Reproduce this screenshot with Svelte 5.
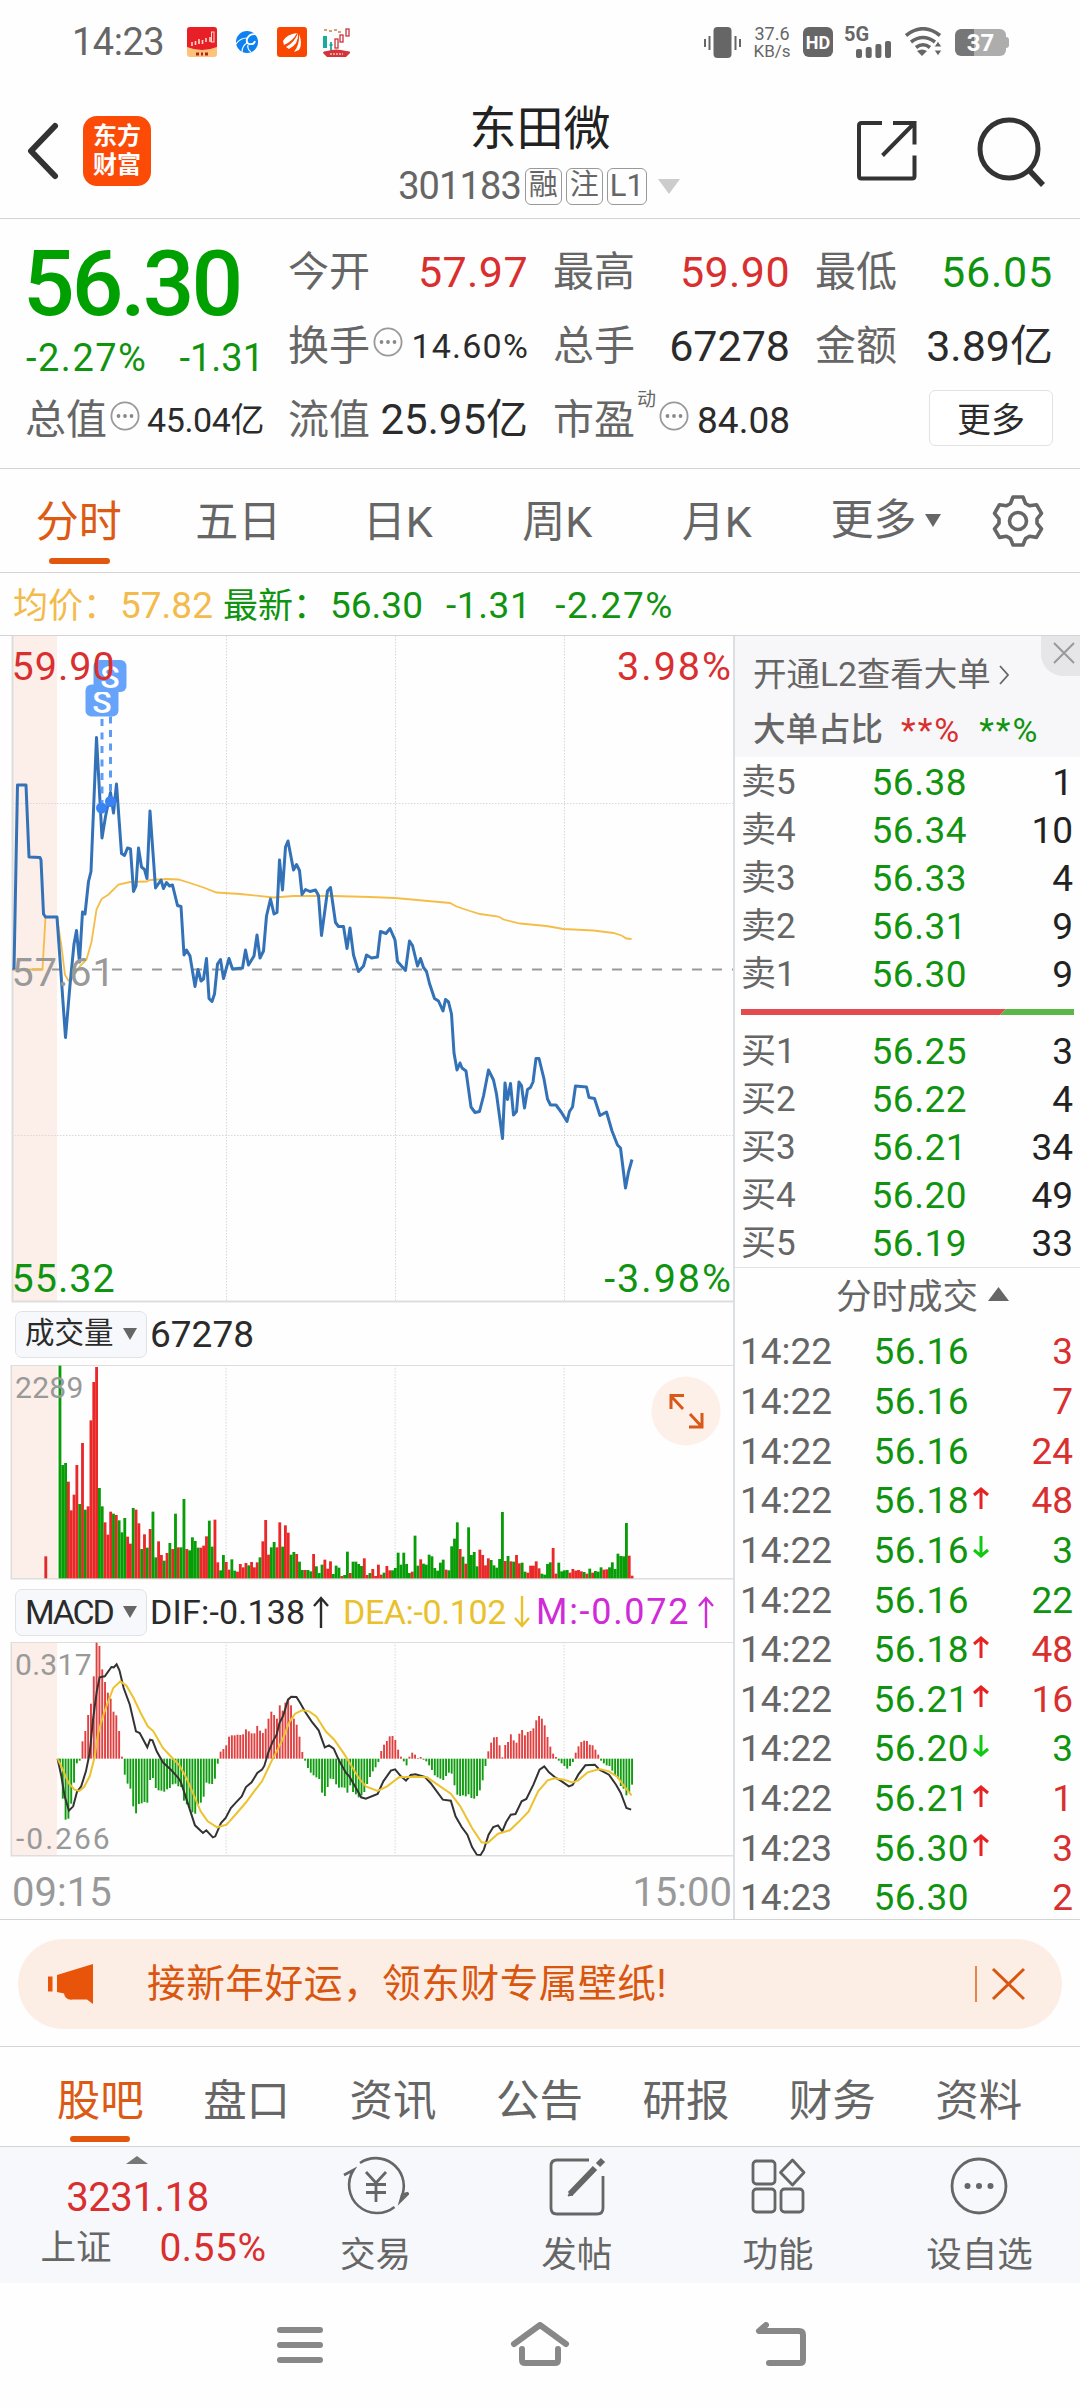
<script>
	const stats = [
		{ label: '今开', value: '57.97', tone: 'up' },
		{ label: '最高', value: '59.90', tone: 'up' },
		{ label: '最低', value: '56.05', tone: 'down' },
		{ label: '换手', value: '14.60%', info: true, size: 'small percent' },
		{ label: '总手', value: '67278' },
		{ label: '金额', value: '3.89亿' },
		{ label: '流值', value: '25.95亿', size: 'tight' },
		{ label: '市盈', value: '84.08', sup: '动', info: true, size: 'medium' }
	];

	const periods = ['分时', '五日', '日K', '周K', '月K'];
	const sections = ['股吧', '盘口', '资讯', '公告', '研报', '财务', '资料'];

	const asks = [
		['卖5', '56.38', 1],
		['卖4', '56.34', 10],
		['卖3', '56.33', 4],
		['卖2', '56.31', 9],
		['卖1', '56.30', 9]
	];

	const bids = [
		['买1', '56.25', 3],
		['买2', '56.22', 4],
		['买3', '56.21', 34],
		['买4', '56.20', 49],
		['买5', '56.19', 33]
	];

	const trades = [
		{ time: '14:22', price: '56.16', qty: 3, side: 'up' },
		{ time: '14:22', price: '56.16', qty: 7, side: 'up' },
		{ time: '14:22', price: '56.16', qty: 24, side: 'up' },
		{ time: '14:22', price: '56.18', move: 'up', qty: 48, side: 'up' },
		{ time: '14:22', price: '56.16', move: 'down', qty: 3, side: 'down' },
		{ time: '14:22', price: '56.16', qty: 22, side: 'down' },
		{ time: '14:22', price: '56.18', move: 'up', qty: 48, side: 'up' },
		{ time: '14:22', price: '56.21', move: 'up', qty: 16, side: 'up' },
		{ time: '14:22', price: '56.20', move: 'down', qty: 3, side: 'down' },
		{ time: '14:22', price: '56.21', move: 'up', qty: 1, side: 'up' },
		{ time: '14:23', price: '56.30', move: 'up', qty: 3, side: 'up' },
		{ time: '14:23', price: '56.30', qty: 2, side: 'up' }
	];

	const priceLine =
		'14,969.5 17.5,785 26,785 29,857 40,857.5 41,860 43.5,914 45.5,917 57,917 65.5,1037.5 70,985 74,944 76.5,930.5 79.5,962 82.5,912 85,914 88.5,881.5 91,871.5 96.5,737.5 102,838 105.5,816.5 110.5,792.5 113.5,813 116.5,784 121.5,853.5 124.5,855.5 127.5,848 130.5,849 133.5,891.5 136,886 138.5,848 141.5,867 144.5,869.5 147,878.5 150,811 155.5,888 161,880 163.5,888.5 166.5,882.5 169.5,886 172.5,885 177.5,905.5 181,906.5 184,955 186.5,950 190,956 195,986.5 198,969.5 201,981 203.5,979 206.5,958.5 209,998.5 212,1001.5 214.5,994 217.5,964 220.5,959.5 223.5,978.5 229,958.5 232.5,969 242.5,968 245.5,950 248.5,965 254,956 257,935 260,958 263.5,951 266.5,916 270.5,899 274,914 277,912.5 279.5,860 282.5,890 285.5,847 288,841 293.5,870 296.5,864.5 299.5,870.5 302,894.5 305.5,889.5 310,891.5 315.5,890 318.5,895.5 321.5,935.5 327.5,891 330.5,887.5 335.5,922.5 338.5,926.5 343.5,926.5 347,948.5 350,928 353.5,955 358.5,971.5 363.5,966 366.5,955 371.5,958 377.5,957 380.5,931.5 386,933.5 390,928.5 395,940 397.5,961.5 405.5,970.5 409.5,941 412.5,945.5 417.5,966 420.5,958.5 423.5,967.5 426.5,971.5 429.5,983.5 434.5,998.5 438.5,1001 443,1011 445.5,999.5 448.5,1002 451.5,1014 454,1053 457,1070 460,1063 462,1068 466,1071 471,1107 475,1112.5 479.5,1111.5 483.5,1096 488.5,1070 493.5,1080 496.5,1094 502.5,1138.5 505,1083 507.5,1099.5 510.5,1083.5 513.5,1115 516.5,1111.5 519,1082 521.5,1085.5 524.5,1108 527.5,1089.5 530.5,1087.5 533,1082 536,1058.5 539,1058.5 544,1079 547.5,1099 550.5,1105 556,1105 561.5,1112.5 567,1121.5 569.5,1111.5 572.5,1107 575.5,1086 586.5,1087 589,1097.5 594.5,1098.5 600,1115.5 606.5,1112 612,1131 617.5,1145 620.5,1148 625.5,1188 628.5,1172 632,1159.5';

	const averageLine =
		'14,969.5 42.5,969.5 45.5,917 57,917 61.5,946.5 65,975 68.5,980.5 71.5,979 80,966 86.5,959.5 91.5,942 96.5,909.5 101.5,899 108.5,894.5 118.5,884.5 130,882 146.5,881.5 150,880 166.5,879 178.5,879.5 190,883 203.5,887.5 216.5,892.5 240,894 273.5,897.5 293.5,896 333.5,896 370,897 395,898 450,903 456.5,906.5 470,911 480,914 498.5,916.5 503.5,919.5 520,923.5 546.5,926 563.5,929 593.5,930.5 613.5,933 621.5,935.5 626.5,938.5 631.5,939';

	// one bar per minute: direction, then height in chart units
	const volumes =
		'g638 g340 g346 r290 r204 r251 r340 g223 r406 g206 r216 r474 r589 r634 g271 g216 r168 r131 r200 g194 r190 g174 g138 g181 r125 r104 g211 r206 r165 g88 r132 g92 r148 g200 g63 r111 r70 g53 r76 g106 r88 g194 r93 g93 g238 r88 g84 g123 g112 g92 r92 r98 r126 g173 g95 r176 r48 g24 g70 r49 r26 g57 g23 r20 r43 r33 r46 g39 r49 r33 r48 g63 r111 r175 r71 g93 g109 r93 r168 g95 r159 r137 g71 g79 r73 g50 g25 r25 g25 g21 r73 g36 g16 g41 r56 r29 r51 g13 g38 g32 r7 g10 g80 r16 g50 g50 g43 g37 r60 r10 g16 r28 r7 r41 r11 g17 r37 r24 g24 g31 g77 g41 g77 g43 g16 r20 g128 g38 r57 g44 g41 g71 g66 g31 g23 g47 g56 r26 g24 g96 g119 g168 r88 g65 r44 g153 g70 g79 g36 r86 r70 r39 r60 g55 g39 g32 g58 g199 r52 g67 r51 g50 r70 r45 g47 g20 r17 r38 r38 r51 r30 g14 g11 g43 g48 r91 r14 g47 g21 g24 g25 r17 r28 r23 r25 r21 g19 r14 g29 r17 g22 g20 g33 r26 r27 g33 g48 g28 g74 g67 g66 g166 r68 r8'
			.split(' ')
			.map((bar) => ({ rising: bar[0] === 'r', size: Number(bar.slice(1)) }));

	const macd = [
		-20, -120, -183, -180, -135, -72, -14, -6, 52, 83, 131, 165, 247, 348, 338, 268, 230, 198, 180, 141, 130, 83, 6,
		-48, -75, -90, -143, -164, -136, -134, -130, -132, -64, -58, -88, -95, -96, -99, -92, -88, -77, -75, -83, -85,
		-126, -137, -148, -161, -165, -136, -132, -114, -72, -75, -76, -60, -15, 21, 29, 40, 66, 70, 70, 72, 71, 73, 88,
		82, 76, 76, 98, 84, 77, 90, 120, 141, 131, 120, 160, 144, 168, 178, 160, 120, 102, 66, 20, -6, -28, -42, -50,
		-56, -61, -102, -112, -85, -60, -61, -77, -87, -86, -87, -102, -80, -100, -107, -116, -110, -100, -76, -55, -38,
		-26, -10, 23, 42, 53, 67, 68, 56, 27, 6, -8, -20, 6, 18, 12, 2, 5, -3, -8, -20, -34, -50, -56, -60, -64, -52,
		-42, -45, -80, -108, -112, -110, -113, -107, -118, -120, -112, -95, -65, -22, 22, 48, 64, 65, 40, 4, 41, 50, 73,
		55, 48, 75, 86, 70, 80, 83, 91, 115, 128, 120, 100, 65, 36, 15, 5, -6, -14, -22, -30, -22, -10, 18, 37, 50, 54,
		53, 42, 40, 27, 12, -6, -14, -20, -22, -36, -50, -60, -82, -90, -110, -100, -78
	];

	const difLine =
		'122,537 130,590 137,650 146,693 155,680 163,637 172,620 182,575 190,520 197,420 205,335 211,293 222,290 236,262 241,263 247,254 253,272 262,325 275,375 288,455 296,460 312,503 318,480 323,482 332,515 345,548 362,570 378,595 383,607 400,680 413,737 430,760 437,752 451,773 456,770 468,730 478,715 489,685 500,668 512,650 521,622 533,608 545,580 555,570 560,558 568,520 577,488 586,465 592,430 600,408 610,360 617,351 628,352 636,370 647,398 660,425 675,452 688,503 697,497 707,507 718,542 733,580 740,590 752,620 765,653 775,657 800,643 812,605 828,573 837,569 848,588 860,603 870,586 880,584 900,592 912,610 938,660 955,663 965,710 978,742 990,765 1000,802 1010,825 1018,826 1025,810 1035,765 1045,742 1055,737 1064,755 1072,728 1082,705 1092,703 1105,665 1115,658 1130,615 1143,570 1153,560 1163,578 1175,592 1190,605 1205,620 1213,616 1225,585 1240,557 1260,555 1270,570 1290,585 1305,615 1315,640 1327,685 1337,690';

	const deaLine =
		'122,537 133,570 145,610 158,630 168,634 178,622 190,590 200,535 208,460 218,410 228,370 240,325 255,305 268,318 283,355 298,400 313,440 325,455 345,505 365,535 380,557 395,595 410,645 425,695 440,725 460,743 480,735 500,703 520,670 540,632 555,605 575,545 588,510 600,475 612,430 625,402 640,392 655,395 670,410 690,455 708,480 730,525 745,560 760,595 775,620 800,634 820,620 845,593 880,591 905,593 930,618 955,642 975,680 1000,745 1020,788 1033,790 1055,762 1080,752 1100,725 1120,695 1140,635 1160,602 1175,596 1195,600 1212,608 1225,602 1245,578 1270,568 1290,575 1308,592 1325,625 1338,647';

	const barX = (i) => 127 + i * 5.97;
</script>

{#snippet info()}
	<svg class="info" viewBox="0 0 30 30">
		<circle cx="15" cy="15" r="13.6" fill="none" stroke="#999" stroke-width="1.8" />
		<g fill="#888"><circle cx="8.5" cy="15" r="1.9" /><circle cx="15" cy="15" r="1.9" /><circle cx="21.5" cy="15" r="1.9" /></g>
	</svg>
{/snippet}

{#snippet cell(item)}
	<div class="cell">
		<span class="label">{item.label}</span>
		{#if item.sup}<sup>{item.sup}</sup>{/if}
		{#if item.info}{@render info()}{/if}
		<span class="value {item.tone ?? ''} {item.size ?? ''}">{item.value}</span>
	</div>
{/snippet}

<div class="screen">
	<div class="status">
		<span class="clock">14:23</span>
		<div class="apps">
			<svg width="30" height="30" viewBox="0 0 30 30">
				<rect width="30" height="30" rx="3" fill="#ffc27a" />
				<path d="M3 0h24a3 3 0 0 1 3 3v17q-15 6-30 0V3a3 3 0 0 1 3-3z" fill="#e91f27" />
				<path d="M5 15v4M8.500 14v4M12 12v5M15.500 13v4M19 11v4M23 10v5" stroke="#ffd9c8" stroke-width="1.600" />
				<rect x="24.500" y="5" width="2.500" height="10" fill="none" stroke="#ffd9c8" />
				<path d="M9 27h3M14 27h2M18 27h3" stroke="#b4241c" stroke-width="3" />
			</svg>
			<svg width="30" height="30" viewBox="0 0 30 30">
				<circle cx="15" cy="15" r="11" fill="#0d80f2" />
				<path d="M27 8q-9-3-12 4-1 4 2 5 5 1 6-3" fill="none" stroke="#fff" stroke-width="1.800" />
				<path d="M4 17q4-6 11-6M10 25q0-6 5-9M19 25q-4-3-3-7" fill="none" stroke="#fff" stroke-width="1.200" />
			</svg>
			<svg width="30" height="30" viewBox="0 0 30 30">
				<rect width="30" height="30" rx="3" fill="#f94600" />
				<path d="M6 14q4-7 14-8-4 8-13 12zM9 20q9-5 12-14 1 11-9 16zM17 25q6-8 5-18 4 10 0 16z" fill="#fff" />
			</svg>
			<svg width="30" height="30" viewBox="0 0 30 30">
				<path d="M3 9v12" stroke="#1caa9d" stroke-width="4" />
				<path d="M9 15v9M7.500 18h3" stroke="#1caa9d" stroke-width="1.800" />
				<g fill="#fff" stroke="#c8343c" stroke-width="1.300"><rect x="13" y="12" width="3" height="9" /><rect x="18" y="8" width="3" height="7" /><rect x="24" y="2" width="3" height="7" /></g>
				<path d="M7 4h3M12 3h3M16 5h3M2 3h3" stroke="#d69f74" stroke-width="2" />
				<path d="M1 26q0-2 4-2 9-3 19 0 5 0 4 2l-4 4H5z" fill="#d4353b" />
				<path d="M8 27h13" stroke="#fff" stroke-width="1.200" stroke-dasharray="2 1" />
			</svg>
		</div>
		<svg class="vibrate" width="37" height="31" viewBox="0 0 37 31">
			<rect x="9.500" width="18" height="31" rx="4" fill="#666" />
			<path d="M1 12v8M5.500 9v14M31.500 9v14M36 12v8" stroke="#666" stroke-width="2" />
		</svg>
		<div class="speed"><span>37.6</span><span>KB/s</span></div>
		<span class="hd">HD</span>
		<div class="signal">
			<span>5G</span>
			<svg width="36" height="17" viewBox="0 0 36 17" fill="#666">
				<rect y="8" width="6" height="9" rx="2" /><rect x="9.700" y="6" width="6" height="11" rx="2" /><rect x="19.400" y="3" width="6" height="14" rx="2" /><rect x="29" width="6" height="17" rx="2" />
			</svg>
		</div>
		<svg class="wifi" width="37" height="30" viewBox="0 0 37 30">
			<path d="M1 8.500q17-13.500 34 0M6 15q12-9 24 0M11 20.500q7-5.500 14 0" fill="none" stroke="#666" stroke-width="3.600" />
			<path d="M12 24q5-3 10 0l-5 5z" fill="#666" />
			<path d="M29 20h8l-4-6zM29 23h8l-4 6z" fill="#666" stroke="#fff" />
		</svg>
		<div class="battery"><span>37</span></div>
	</div>

	<header>
		<svg class="back" width="34" height="60" viewBox="0 0 34 60">
			<path d="M29 5L5 30l24 25" fill="none" stroke="#333" stroke-width="6" stroke-linecap="round" stroke-linejoin="round" />
		</svg>
		<div class="logo"><span>东方</span><span>财富</span></div>
		<div class="title">
			<h1>东田微</h1>
			<div class="code">
				<span class="number">301183</span>
				<span class="badge">融</span>
				<span class="badge">注</span>
				<span class="badge wide">L1</span>
				<svg width="22" height="15" viewBox="0 0 22 15"><path d="M0 0h22L11 15z" fill="#ccc" /></svg>
			</div>
		</div>
		<svg class="share" width="60" height="60" viewBox="0 0 60 60" fill="none" stroke="#333" stroke-width="4">
			<path d="M25 2H4.500Q2 2 2 4.500V55q0 2.500 2.500 2.500H55q2.500 0 2.500-2.500V34.500M36 2h21.500v21.500M57 2.500L25.500 34.500" />
		</svg>
		<svg class="search" width="70" height="72" viewBox="0 0 70 72" fill="none" stroke="#333" stroke-width="5">
			<circle cx="32" cy="33" r="29" /><path d="M51 53l15 16" stroke-width="5.500" />
		</svg>
	</header>

	<section class="quote">
		<div class="main">
			<span class="last">56.30</span>
			<div class="change"><span class="rate">-2.27%</span><span>-1.31</span></div>
			{@render cell({ label: '总值', value: '45.04亿', info: true, size: 'small' })}
		</div>
		<div class="stats">
			{#each stats as item}
				{@render cell(item)}
			{/each}
			<div class="cell end"><button>更多</button></div>
		</div>
	</section>

	<nav class="periods">
		{#each periods as name, i}
			<span class="period" class:active={i === 0}>{name}</span>
		{/each}
		<span class="period more">更多<svg width="16" height="13" viewBox="0 0 16 13"><path d="M0 0h16L8 13z" fill="#666" /></svg></span>
		<svg class="gear" width="54" height="54" viewBox="0 0 54 54" fill="none" stroke="#666" stroke-width="3.600" stroke-linejoin="round">
			<path d="M22 3h10l2.500 6.500 4 2.300 7-1.100 5 8.600-4.500 5.500v4.500l4.500 5.500-5 8.600-7-1.100-4 2.300L32 51H22l-2.500-6.400-4-2.300-7 1.100-5-8.600L8 29.300v-4.500l-4.500-5.500 5-8.600 7 1.100 4-2.300z" />
			<circle cx="27" cy="27" r="8.500" />
		</svg>
	</nav>

	<div class="legend">
		<span class="avg"><i>均价：</i>57.82</span>
		<span class="down"><i>最新：</i>56.30</span>
		<span class="down diff">-1.31</span>
		<span class="down rate">-2.27%</span>
	</div>

	<div class="board">
		<div class="charts">
			<svg class="price" viewBox="0 636 734 667">
				<rect x="12" y="636" width="45" height="665" fill="#fceee8" />
				<g stroke="#d8d8d8" stroke-dasharray="1.500 1.500">
					<path d="M12 803.500H733M12 1135.500H733M226.500 636V1301M395.500 636V1301M564.500 636V1301" />
				</g>
				<path d="M12.500 636V1301.500H733" fill="none" stroke="#ddd" stroke-width="2" />
				<path d="M12 969.500H733" stroke="#999" stroke-width="2" stroke-dasharray="10 10" />
				<polyline points={averageLine} fill="none" stroke="#f5bd48" stroke-width="1.800" />
				<polyline points={priceLine} fill="none" stroke="#3472b8" stroke-width="3" stroke-linejoin="round" />
				<path d="M102 719V804M110.500 703V798" stroke="#5c9cf5" stroke-width="3" stroke-dasharray="7 6.500" />
				<g fill="#3a83f5"><circle cx="101.500" cy="808" r="5.500" /><circle cx="110.500" cy="801.500" r="5.500" /></g>
				<rect x="85.500" y="684.500" width="33" height="32" rx="6" fill="#66a3fa" />
				<text x="102" y="712.500" class="trade-mark">S</text>
				<rect x="93.500" y="660" width="33" height="32" rx="6" fill="#66a3fa" />
				<text x="110" y="688" class="trade-mark">S</text>
				<text x="11.500" y="680" class="up">59.90</text>
				<text x="11.500" y="985.500" class="flat">57.61</text>
				<text x="11.500" y="1292" class="down">55.32</text>
				<text x="733" y="680" class="up right">3.98%</text>
				<text x="733" y="1292" class="down right">-3.98%</text>
			</svg>

			<div class="indicator">
				<span class="picker">成交量<svg width="14" height="12" viewBox="0 0 14 12"><path d="M0 0h14L7 12z" fill="#666" /></svg></span>
				<span>67278</span>
			</div>
			<div class="sub">
				<svg viewBox="0 196 1557 645" preserveAspectRatio="none">
					<rect x="24" y="196" width="97" height="640" fill="#fceee8" />
					<path d="M479 196V836M837 196V836M1195 196V836" class="grid" />
					<path d="M24 197H1553M24 196V837H1553" class="frame" />
					<rect x="94" y="770" width="6" height="66" fill="#e22828" />
					{#each volumes as bar, i}
						<rect x={barX(i) - 3} y={836 - bar.size} width="6" height={bar.size} fill={bar.rising ? '#e92828' : '#079d07'} />
					{/each}
				</svg>
				<span class="scale top">2289</span>
				<svg class="expand" width="70" height="70" viewBox="0 0 70 70">
					<circle cx="35" cy="35" r="34.500" fill="#fdf0e9" />
					<path d="M33 19.500H20V33M20 20l12 13M51 37v14H38M39 38l12 13" fill="none" stroke="#d9591a" stroke-width="3" />
				</svg>
			</div>

			<div class="indicator second">
				<span class="picker">MACD<svg width="14" height="12" viewBox="0 0 14 12"><path d="M0 0h14L7 12z" fill="#666" /></svg></span>
				<span class="dif">DIF:-0.138<svg class="arrow" viewBox="0 0 16 32"><path d="M8 32V2M1 10l7-8 7 8" /></svg></span>
				<span class="dea">DEA:-0.102<svg class="arrow" viewBox="0 0 16 32"><path d="M8 0v30M1 22l7 8 7-8" /></svg></span>
				<span class="m">M:-0.072<svg class="arrow" viewBox="0 0 16 32"><path d="M8 32V2M1 10l7-8 7 8" /></svg></span>
			</div>
			<div class="sub">
				<svg viewBox="0 187 1557 645" preserveAspectRatio="none">
					<rect x="24" y="187" width="97" height="640" fill="#fceee8" />
					<path d="M479 187V828M837 187V828M1195 187V828" class="grid" />
					<path d="M24 188H1553M24 187V828H1553" class="frame" />
					{#each macd as value, i}
						<rect x={barX(i) - 2} y={value > 0 ? 537 - value : 537} width="4" height={Math.abs(value)} fill={value > 0 ? '#e04040' : '#109c10'} />
					{/each}
					<polyline points={difLine} class="line" stroke="#333" />
					<polyline points={deaLine} class="line" stroke="#ecc22e" />
				</svg>
				<span class="scale top">0.317</span>
				<span class="scale bottom">-0.266</span>
			</div>
			<div class="hours"><span>09:15</span><span>15:00</span></div>
		</div>

		<aside>
			<div class="level2">
				<div class="promo">开通L2查看大单<svg width="10" height="20" viewBox="0 0 10 20"><path d="M1 1l8 9-8 9" fill="none" stroke="#666" stroke-width="1.800" /></svg></div>
				<div class="ratio"><b>大单占比</b><span class="up">**%</span><span class="down">**%</span></div>
				<div class="close">
					<svg width="22" height="22" viewBox="0 0 22 22"><path d="M1 1l20 20M21 1L1 21" stroke="#999" stroke-width="2" /></svg>
				</div>
			</div>
			<div class="book">
				{#each asks as [name, price, qty]}
					<div class="level"><span class="name">{name}</span><span class="at">{price}</span><span class="qty">{qty}</span></div>
				{/each}
			</div>
			<svg class="balance" width="333" height="6" viewBox="0 0 333 6">
				<path d="M0 0h265l-6 6H0z" fill="#e34b4f" /><path d="M265 0h68v6h-74z" fill="#5bb746" />
			</svg>
			<div class="book">
				{#each bids as [name, price, qty]}
					<div class="level"><span class="name">{name}</span><span class="at">{price}</span><span class="qty">{qty}</span></div>
				{/each}
			</div>
			<div class="ticks-title">分时成交<svg width="21" height="14" viewBox="0 0 21 14"><path d="M0 14h21L10.500 0z" fill="#666" /></svg></div>
			<div class="ticks">
				{#each trades as trade}
					<div class="tick">
						<span class="time">{trade.time}</span>
						<span class="at">{trade.price}</span>
						<span class="move">
							{#if trade.move === 'up'}
								<svg width="16" height="22" viewBox="0 0 16 22"><path d="M8 22V2M1 8l7-6 7 6" fill="none" stroke="#e62222" stroke-width="3" /></svg>
							{:else if trade.move === 'down'}
								<svg width="16" height="22" viewBox="0 0 16 22"><path d="M8 0v20M1 14l7 6 7-6" fill="none" stroke="#12c912" stroke-width="3" /></svg>
							{/if}
						</span>
						<span class="qty {trade.side}">{trade.qty}</span>
					</div>
				{/each}
			</div>
		</aside>
	</div>

	<div class="banner-wrap">
		<div class="banner">
			<svg width="46" height="40" viewBox="0 0 46 40" fill="#e8540a">
				<path d="M9 11L45 0v40l-6-4.500H25q-8 1-9-6L9 28zM0 12.500h4.500v15H0z" />
			</svg>
			<span>接新年好运，领东财专属壁纸!</span>
			<svg class="dismiss" width="50" height="36" viewBox="0 0 50 36" stroke="#d9560f">
				<path d="M1 0v36" stroke-width="1.400" /><path d="M18 3l31 30M49 3L18 33" stroke-width="3" />
			</svg>
		</div>
	</div>

	<nav class="sections">
		{#each sections as name, i}
			<span class:active={i === 0}>{name}</span>
		{/each}
	</nav>

	<footer>
		<div class="index">
			<svg width="22" height="8" viewBox="0 0 22 8"><path d="M0 8h22L11 0z" fill="#777" /></svg>
			<span class="points up">3231.18</span>
			<div class="row"><span>上证</span><span class="pct up">0.55%</span></div>
		</div>
		<div class="action">
			<svg viewBox="0 0 66 60" fill="none" stroke="#666" stroke-width="2.800">
				<path d="M17 7A28 28 0 0 1 59.500 38.500L65.500 37M51.500 51A28 28 0 0 1 10.500 14L1 19" stroke-width="2.600" />
				<path d="M65.500 37l-8 8 2-7" />
				<path d="M23 16l10 11 10-11M33 27v19M23 28.500h20M23 36.500h20" />
			</svg>
			<span>交易</span>
		</div>
		<div class="action">
			<svg viewBox="0 0 66 60" fill="none" stroke="#666" stroke-width="2.800">
				<path d="M45 4H13q-6 0-6 6v42q0 6 6 6h40q6 0 6-6V20" />
				<path d="M59 4l-5 5M51 12L26 38" stroke-width="6" /><path d="M24 40l5-1-3-3z" fill="#666" stroke-width="1" />
			</svg>
			<span>发帖</span>
		</div>
		<div class="action">
			<svg viewBox="0 0 66 60" fill="none" stroke="#666" stroke-width="2.800">
				<rect x="8" y="5" width="22" height="23" rx="3.500" /><rect x="8" y="33" width="22" height="23" rx="3.500" /><rect x="36" y="33" width="22" height="23" rx="3.500" />
				<path d="M47.500 4l11.500 12.500L47.500 29 35.500 16.500z" stroke-linejoin="round" />
			</svg>
			<span>功能</span>
		</div>
		<div class="action">
			<svg viewBox="0 0 66 60" fill="none" stroke="#666" stroke-width="2.800">
				<circle cx="33" cy="30" r="27" />
				<g fill="#666" stroke="none"><circle cx="21.500" cy="30" r="3" /><circle cx="33" cy="30" r="3" /><circle cx="44.500" cy="30" r="3" /></g>
			</svg>
			<span>设自选</span>
		</div>
	</footer>

	<div class="system">
		<svg width="60" height="46" viewBox="0 0 60 46"><path d="M10 8h40M10 23h40M10 38h40" /></svg>
		<svg width="60" height="46" viewBox="0 0 60 46"><path d="M4 22L30 3l26 19M12 27v11q0 3 3 3h30q3 0 3-3V27" /></svg>
		<svg width="60" height="46" viewBox="0 0 60 46"><path d="M16 3L9 9h40q4 0 4 4v25q0 3-3 3H19" /></svg>
	</div>
</div>

<style>
	:global(body) {
		margin: 0;
		background: #fefefe;
	}

	.screen {
		width: 1080px;
		height: 2408px;
		overflow: hidden;
		background: #fefefe;
		color: #666;
		font-family: Roboto, 'Noto Sans CJK SC', sans-serif;
		line-height: 1;
		white-space: nowrap;
	}

	.screen :global(*) {
		box-sizing: border-box;
	}

	svg {
		display: block;
		flex: none;
	}

	.up {
		color: #d92f2f;
		fill: #d92f2f;
	}

	.down {
		color: #109410;
		fill: #109410;
	}

	/* status bar */
	.status {
		height: 84px;
		display: flex;
		align-items: center;
		padding: 0 74px 0 72px;
	}

	.clock {
		width: 115px;
		font-size: 38px;
		letter-spacing: -0.5px;
	}

	.apps {
		display: flex;
		gap: 15px;
		flex: 1;
	}

	.speed {
		display: flex;
		flex-direction: column;
		align-items: center;
		width: 36px;
		margin-left: 13px;
		font-size: 17px;
	}

	.speed span:first-child {
		font-size: 18px;
	}

	.hd {
		width: 30px;
		height: 30px;
		margin-left: 13px;
		border-radius: 6px;
		background: #666;
		color: #fff;
		font-size: 18px;
		font-weight: 700;
		line-height: 31px;
		text-align: center;
	}

	.signal {
		display: flex;
		flex-direction: column;
		width: 48px;
		height: 31px;
		margin-left: 11px;
	}

	.signal span {
		font-size: 20px;
		font-weight: 700;
		line-height: 15px;
	}

	.signal svg {
		align-self: flex-end;
		margin-top: -1px;
	}

	.wifi {
		margin-left: 13px;
	}

	.battery {
		position: relative;
		width: 51px;
		height: 27px;
		margin-left: 13px;
		border-radius: 6px;
		background: linear-gradient(to right, #767676 37%, #adadad 37%);
		color: #fff;
		font-size: 24px;
		font-weight: 700;
		line-height: 28px;
		text-align: center;
	}

	.battery::after {
		content: '';
		position: absolute;
		right: -3px;
		top: 8px;
		width: 3px;
		height: 11px;
		border-radius: 0 3px 3px 0;
		background: #adadad;
	}

	/* header */
	header {
		height: 135px;
		display: flex;
		align-items: center;
		padding: 0 33px 0 26px;
		border-bottom: 1px solid #d4d4d4;
	}

	.back {
		margin-top: -1px;
	}

	.logo {
		width: 68px;
		height: 70px;
		margin-left: 23px;
		margin-top: -1px;
		border-radius: 14px;
		background: #fb4b07;
		color: #fff;
		display: flex;
		flex-direction: column;
		align-items: center;
		justify-content: center;
		gap: 5px;
		font-size: 24px;
		font-weight: 700;
	}

	.title {
		flex: 1;
		height: 134px;
		display: flex;
		flex-direction: column;
		align-items: center;
		padding-top: 21px;
		margin-left: 70px;
	}

	h1 {
		margin: 0 0 15px 2px;
		font-size: 47px;
		font-weight: 400;
		line-height: 47px;
		color: #222;
	}

	.code {
		display: flex;
		align-items: center;
		gap: 4px;
	}

	.number {
		font-size: 38px;
		letter-spacing: -0.9px;
	}

	.badge {
		width: 37px;
		height: 37px;
		border: 1.500px solid #999;
		border-radius: 6px;
		font-size: 29px;
		line-height: 33px;
		text-align: center;
	}

	.wide {
		width: 40px;
		font-size: 31px;
	}

	.code svg {
		margin-left: 7px;
	}

	.share {
		margin-right: 60px;
	}

	.search {
		margin-top: 1px;
	}

	/* quote */
	.quote {
		height: 250px;
		display: flex;
		padding: 16px 25px 0 25px;
		border-bottom: 1px solid #d4d4d4;
	}

	.main {
		width: 239px;
		margin-right: 24px;
	}

	.last {
		display: block;
		height: 94px;
		margin-left: -2px;
		font-size: 91px;
		font-weight: 500;
		line-height: 99px;
		letter-spacing: -3px;
		color: #00a000;
	}

	.change {
		display: flex;
		justify-content: space-between;
		height: 54px;
		padding-left: 1px;
		color: #109410;
		font-size: 38px;
		line-height: 58px;
	}

	.rate {
		letter-spacing: 1.5px;
	}

	.stats {
		flex: 1;
		display: grid;
		grid-template-columns: 240px 237px 238px;
		grid-auto-rows: 74px;
		column-gap: 25px;
	}

	.cell {
		display: flex;
		align-items: center;
		height: 74px;
	}

	.label {
		font-size: 41px;
	}

	.value {
		margin-left: auto;
		color: #2b2b2b;
		font-size: 43px;
	}

	.value.up {
		color: #d92f2f;
		letter-spacing: 0.4px;
	}

	.value.down {
		color: #109410;
		letter-spacing: 0.8px;
	}

	.small {
		font-size: 34px;
		letter-spacing: -0.4px;
	}

	.percent {
		letter-spacing: 1.2px;
		margin-right: -1px;
	}

	.tight {
		font-size: 42px;
	}

	.medium {
		font-size: 37px;
	}

	.info {
		width: 30px;
		height: 30px;
		margin: -9px 0 0 3px;
	}

	sup {
		align-self: flex-start;
		margin: 7px 0 0 2px;
		font-size: 19px;
	}

	.end {
		justify-content: flex-end;
	}

	button {
		width: 124px;
		height: 56px;
		margin-top: -5px;
		border: 1.500px solid #e2e2e2;
		border-radius: 6px;
		background: #fff;
		color: #2b2b2b;
		font: 34px Roboto, 'Noto Sans CJK SC', sans-serif;
	}

	/* period tabs */
	.periods {
		height: 104px;
		display: flex;
		align-items: center;
		border-bottom: 1px solid #d4d4d4;
	}

	.period {
		width: 159.500px;
		height: 103px;
		font-size: 43px;
		line-height: 107px;
		text-align: center;
		position: relative;
		left: -1px;
	}

	.period.active {
		color: #dc5a14;
	}

	.period.active::after {
		content: '';
		position: absolute;
		left: 50px;
		bottom: 8px;
		width: 61px;
		height: 6px;
		border-radius: 3px;
		background: #e2570d;
	}

	.more {
		width: 178px;
		display: flex;
		align-items: center;
		justify-content: center;
		gap: 8px;
	}

	.gear {
		margin-left: 15px;
	}

	/* legend */
	.legend {
		height: 63px;
		display: flex;
		align-items: center;
		padding: 2px 0 0 13px;
		border-bottom: 1px solid #d4d4d4;
		font-size: 37px;
	}

	.legend i {
		font-size: 35px;
		font-style: normal;
		margin-right: 2px;
	}

	.avg {
		width: 210px;
		color: #f2bb4c;
	}

	.diff {
		margin: 0 24px 0 23px;
		letter-spacing: 0.6px;
	}

	/* board */
	.board {
		display: flex;
		height: 1284px;
		border-bottom: 1px solid #d4d4d4;
	}

	.charts {
		width: 735px;
		border-right: 2px solid #dcdfe3;
	}

	.price {
		width: 734px;
		height: 667px;
		font-size: 39.500px;
	}

	.price text {
		letter-spacing: 1px;
	}

	.price .flat {
		fill: #999;
	}

	.price .right {
		text-anchor: end;
		letter-spacing: 2px;
	}

	.price .trade-mark {
		fill: #fff;
		font-size: 32px;
		font-weight: 500;
		text-anchor: middle;
		letter-spacing: 0;
	}

	.indicator {
		height: 62px;
		display: flex;
		align-items: center;
		padding-left: 15px;
		color: #2b2b2b;
		font-size: 37px;
	}

	.second {
		padding-top: 2px;
		font-size: 34px;
	}

	.second .picker {
		font-size: 34px;
		letter-spacing: -2.2px;
	}

	.picker {
		width: 132px;
		height: 47px;
		margin-right: 3px;
		border: 1px solid #e0e3e6;
		border-radius: 7px;
		background: #f7f8fb;
		display: flex;
		align-items: center;
		justify-content: space-between;
		padding: 0 9px 0 9px;
		font-size: 29.500px;
	}

	.arrow {
		display: inline-block;
		width: 16px;
		height: 32px;
		margin-left: 8px;
		vertical-align: -4px;
		fill: none;
		stroke: currentColor;
		stroke-width: 2.400;
	}

	.dif {
		width: 193px;
		letter-spacing: 0.2px;
	}

	.dea {
		width: 193px;
		color: #e9c12c;
		letter-spacing: -0.4px;
	}

	.m {
		color: #cf2bd6;
		font-size: 36px;
		letter-spacing: 1.7px;
	}

	.sub {
		position: relative;
		height: 215px;
	}

	.sub > svg:first-child {
		width: 735px;
		height: 215px;
	}

	.grid {
		fill: none;
		stroke: #d8d8d8;
		stroke-dasharray: 1.500 1.500;
		vector-effect: non-scaling-stroke;
	}

	.frame {
		fill: none;
		stroke: #ddd;
		stroke-width: 1.500;
		vector-effect: non-scaling-stroke;
	}

	.line {
		fill: none;
		stroke-width: 2;
		vector-effect: non-scaling-stroke;
	}

	.scale {
		position: absolute;
		left: 15px;
		color: #999;
		font-size: 30px;
		letter-spacing: 0.3px;
	}

	.top {
		top: 8px;
	}

	.bottom {
		bottom: 3px;
		left: 16px;
		letter-spacing: 2px;
	}

	.expand {
		position: absolute;
		left: 651px;
		top: 11px;
	}

	.hours {
		display: flex;
		justify-content: space-between;
		padding: 16px 1px 0 12px;
		color: #999;
		font-size: 40px;
	}

	/* order book */
	aside {
		flex: 1;
	}

	.level2 {
		position: relative;
		height: 121px;
		padding: 21px 0 0 18px;
		background: #f7f7fa;
	}

	.promo {
		display: flex;
		align-items: center;
		gap: 8px;
		height: 36px;
		font-size: 33.500px;
	}

	.ratio {
		display: flex;
		align-items: center;
		gap: 18px;
		height: 36px;
		margin-top: 19px;
		font-size: 32.500px;
	}

	.ratio b {
		font-weight: 500;
	}

	.ratio span {
		font-size: 34px;
		letter-spacing: 2px;
	}

	.close {
		position: absolute;
		top: 0;
		right: 0;
		width: 39px;
		height: 40px;
		padding: 6px 0 0 12px;
		border-bottom-left-radius: 22px;
		background: #e6e6e8;
	}

	.book {
		padding: 1px 7px 0 6px;
	}

	.level {
		display: flex;
		align-items: center;
		height: 48px;
		padding-top: 1px;
		font-size: 37px;
	}

	.name {
		width: 100px;
		font-size: 35px;
	}

	.at {
		width: 126px;
		text-align: right;
		color: #109410;
		letter-spacing: 0.5px;
	}

	.qty {
		flex: 1;
		text-align: right;
		color: #222;
	}

	.qty.up {
		color: #d92f2f;
	}

	.qty.down {
		color: #109410;
	}

	.balance {
		margin: 11px 0 11px 6px;
	}

	.ticks-title {
		display: flex;
		align-items: center;
		justify-content: center;
		gap: 10px;
		height: 60px;
		border-top: 1px solid #e3e3e3;
		padding-left: 30px;
		font-size: 35.500px;
	}

	.ticks-title svg {
		margin-top: -7px;
	}

	.tick {
		display: flex;
		align-items: center;
		height: 49.650px;
		padding: 0 7px 0 5px;
		font-size: 37px;
	}

	.time {
		width: 103px;
	}

	.move {
		width: 22px;
		padding-left: 4px;
		margin-top: -6px;
	}

	/* banner */
	.banner-wrap {
		height: 127px;
		padding: 19px 18px 0;
		border-bottom: 1px solid #d4d4d4;
	}

	.banner {
		height: 90px;
		display: flex;
		align-items: center;
		padding: 0 37px 0 30px;
		border-radius: 45px;
		background: #fceee5;
		color: #d9560f;
		font-size: 38.700px;
	}

	.banner span {
		flex: 1;
		margin-left: 53px;
		padding-top: 1px;
		letter-spacing: 0.5px;
	}

	/* lower tabs */
	.sections {
		height: 100px;
		display: flex;
		padding: 0 28px 0 27px;
		border-bottom: 1px solid #d4d4d4;
	}

	.sections span {
		position: relative;
		flex: 1;
		font-size: 43.500px;
		line-height: 110px;
		text-align: center;
	}

	.sections .active {
		color: #dc5a14;
	}

	.sections .active::after {
		content: '';
		position: absolute;
		left: 43px;
		bottom: 4px;
		width: 60px;
		height: 6px;
		border-radius: 3px;
		background: #e2570d;
	}

	footer {
		height: 136px;
		display: flex;
		background: #f7f8fb;
	}

	.index {
		width: 275px;
		display: flex;
		flex-direction: column;
		align-items: center;
		padding-top: 9px;
	}

	.points {
		margin-top: 14px;
		font-size: 40px;
		letter-spacing: -0.4px;
	}

	.row {
		display: flex;
		align-items: center;
		gap: 48px;
		margin-top: 11px;
		padding-left: 32px;
		font-size: 35.500px;
	}

	.pct {
		font-size: 39px;
		letter-spacing: 0.5px;
	}

	.action {
		width: 201.300px;
		display: flex;
		flex-direction: column;
		align-items: center;
		padding-top: 9px;
		gap: 22px;
		font-size: 35.500px;
	}

	.action svg {
		width: 66px;
		height: 60px;
	}

	.system {
		display: flex;
		justify-content: center;
		gap: 180px;
		padding-top: 39px;
	}

	.system path {
		fill: none;
		stroke: #888;
		stroke-width: 6;
		stroke-linecap: round;
		stroke-linejoin: round;
	}
</style>
